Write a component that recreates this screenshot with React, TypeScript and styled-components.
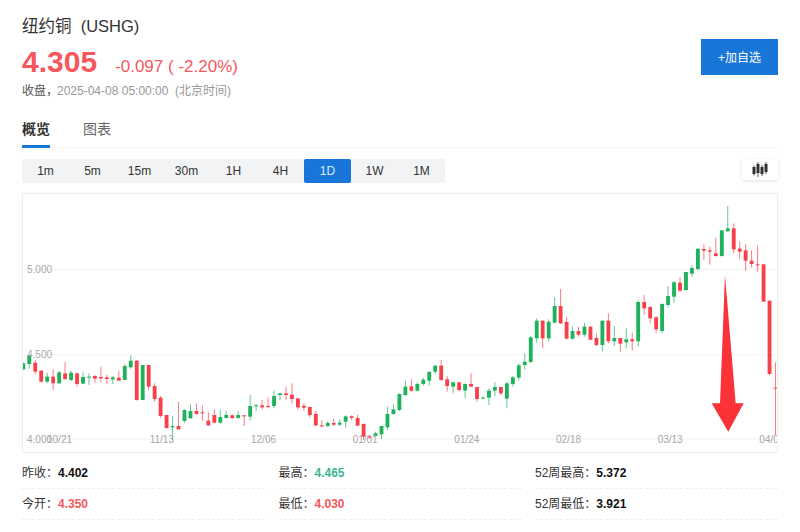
import React from 'react';
import styled, { createGlobalStyle } from 'styled-components';

const GlobalStyle = createGlobalStyle`
  html, body {
    margin: 0;
    background: #fff;
  }
  body {
    font-family: "Liberation Sans", "Noto Sans CJK SC", sans-serif;
    color: #333;
    overflow: hidden;
  }
`;

const UP = '#1fb25c';
const DOWN = '#f7414a';
const RED_TEXT = '#f5575c';

// chart coordinates are in thirds of a pixel, measured from the 4.500 area of the plot
type Candle = ['g' | 'r', number, number, number, number];

const CANDLES: Candle[] = [
  ['g', 70, 88, 68, 90], ['g', 48, 72, 44, 86], ['r', 68, 95, 60, 103], ['r', 92, 125, 90, 128],
  ['g', 110, 125, 98, 130], ['r', 110, 130, 88, 150], ['g', 97, 130, 92, 132], ['r', 100, 117, 66, 120],
  ['g', 98, 120, 92, 124], ['r', 100, 132, 98, 140], ['g', 111, 131, 97, 133], ['g', 110, 113, 100, 135],
  ['r', 108, 116, 105, 128], ['r', 111, 115, 80, 128], ['r', 112, 117, 105, 133], ['g', 112, 118, 108, 132],
  ['r', 113, 122, 92, 122], ['g', 78, 120, 72, 120], ['g', 62, 82, 46, 86], ['r', 62, 180, 60, 182],
  ['g', 75, 180, 75, 180], ['r', 75, 140, 75, 150], ['r', 138, 177, 130, 185], ['r', 173, 228, 168, 233],
  ['r', 225, 264, 225, 266], ['g', 258, 262, 228, 300], ['r', 258, 268, 185, 268], ['g', 210, 243, 208, 248],
  ['g', 213, 235, 193, 236], ['r', 213, 222, 190, 224], ['r', 217, 220, 196, 243], ['r', 242, 256, 216, 258],
  ['r', 225, 248, 208, 250], ['g', 231, 248, 210, 250], ['g', 225, 234, 213, 235], ['r', 226, 234, 222, 238],
  ['g', 225, 234, 214, 236], ['r', 226, 229, 226, 258], ['g', 198, 230, 165, 242], ['g', 196, 199, 192, 214],
  ['r', 196, 202, 180, 208], ['r', 198, 201, 172, 205], ['g', 168, 198, 152, 205], ['g', 160, 165, 158, 180],
  ['r', 160, 165, 140, 180], ['r', 164, 177, 130, 190], ['r', 175, 202, 175, 208], ['r', 197, 203, 190, 213],
  ['r', 201, 225, 200, 232], ['r', 222, 256, 213, 258], ['r', 256, 258, 240, 262], ['g', 249, 258, 243, 262],
  ['r', 249, 254, 236, 258], ['g', 248, 254, 238, 258], ['g', 229, 245, 226, 263], ['r', 229, 234, 226, 240],
  ['r', 234, 257, 224, 258], ['r', 252, 290, 250, 300], ['r', 290, 293, 288, 296], ['g', 280, 288, 275, 290],
  ['g', 258, 283, 258, 297], ['g', 222, 262, 200, 270], ['g', 208, 222, 193, 225], ['g', 162, 210, 160, 213],
  ['g', 140, 165, 122, 168], ['r', 139, 152, 118, 155], ['g', 132, 152, 127, 155], ['g', 119, 132, 113, 137],
  ['g', 96, 122, 93, 137], ['g', 77, 95, 75, 102], ['r', 77, 120, 60, 122], ['r', 118, 138, 108, 155],
  ['g', 127, 140, 125, 160], ['r', 127, 150, 127, 155], ['g', 132, 152, 130, 175], ['r', 132, 140, 100, 140],
  ['r', 141, 177, 141, 185], ['g', 173, 176, 168, 178], ['g', 152, 173, 145, 195], ['g', 141, 152, 127, 168],
  ['r', 141, 160, 141, 165], ['g', 130, 176, 127, 205], ['g', 112, 132, 108, 140], ['g', 76, 113, 70, 122],
  ['g', 65, 75, 40, 90], ['g', -8, 66, -12, 70], ['g', -58, -5, -65, 8], ['r', -58, -5, -58, 25],
  ['g', -55, -5, -62, 5], ['g', -102, -52, -128, -50], ['r', -102, -50, -153, -48], ['r', -54, -4, -68, -2],
  ['g', -27, -4, -40, -2], ['r', -27, -16, -40, -10], ['g', -40, -16, -52, -10], ['r', -40, -1, -40, 0],
  ['r', -6, 15, -20, 18], ['g', -58, 15, -58, 35], ['r', -58, 4, -80, 10], ['g', -6, 4, -42, 18],
  ['r', -6, 11, -6, 35], ['g', -2, 7, -35, 25], ['r', -2, 4, -22, 32], ['g', -114, 4, -120, 18],
  ['r', -114, -95, -135, -75], ['r', -99, -65, -102, -50], ['r', -68, -32, -72, -22], ['g', -108, -27, -110, -20],
  ['g', -132, -105, -162, -98], ['g', -173, -130, -177, -112], ['r', -172, -148, -188, -145], ['g', -204, -150, -204, -148],
  ['g', -216, -199, -224, -190], ['g', -274, -213, -274, -208], ['r', -273, -268, -287, -240], ['r', -269, -265, -280, -226],
  ['r', -260, -252, -307, -250], ['g', -329, -252, -329, -250], ['g', -335, -326, -402, -325], ['r', -335, -272, -350, -260],
  ['r', -274, -265, -296, -242], ['r', -269, -238, -287, -208], ['r', -238, -228, -269, -217], ['r', -227, -225, -283, -205],
  ['r', -227, -115, -227, -115], ['r', -118, 102, -118, 106], ['r', 143, 146, 67, 285]
];

const RANGES = ['1m', '5m', '15m', '30m', '1H', '4H', '1D', '1W', '1M'];

const Y_LABELS = [
  { text: '5.000', line: 229, base: 239 },
  { text: '4.500', line: 486, base: 496 },
  { text: '4.000', line: 738, base: 749 }
];

const X_LABELS = [
  { text: '10/21', x: 75 },
  { text: '11/13', x: 383 },
  { text: '12/06', x: 687 },
  { text: '01/01', x: 992 },
  { text: '01/24', x: 1297 },
  { text: '02/18', x: 1602 },
  { text: '03/13', x: 1907 },
  { text: '04/01', x: 2212 }
];

const STATS = [
  [
    { label: '昨收：', value: '4.402', tone: '#111' },
    { label: '最高：', value: '4.465', tone: '#3bb594' },
    { label: '52周最高：', value: '5.372', tone: '#111' }
  ],
  [
    { label: '今开：', value: '4.350', tone: RED_TEXT },
    { label: '最低：', value: '4.030', tone: RED_TEXT },
    { label: '52周最低：', value: '3.921', tone: '#111' }
  ]
];

const Page = styled.div`
  width: 800px;
  height: 532px;
  padding: 14px 22px 0;
  box-sizing: border-box;
  overflow: hidden;
`;

const Header = styled.header`
  display: flex;
  justify-content: space-between;
  align-items: flex-start;
  height: 87px;
`;

const Title = styled.h1`
  margin: 0;
  font-size: 16.5px;
  font-weight: 400;
  line-height: 24px;
  color: #333;
  white-space: pre;
`;

const PriceRow = styled.div`
  display: flex;
  align-items: baseline;
  gap: 18px;
  height: 40px;
  margin-top: 4px;
  color: ${RED_TEXT};
`;

const Price = styled.span`
  font-size: 30px;
  font-weight: 700;
  line-height: 40px;
`;

const Change = styled.span`
  font-size: 17px;
  white-space: pre;
`;

const Quote = styled.div`
  display: flex;
  font-size: 12px;
  line-height: 16px;
  margin-top: 1px;
  color: #999;
  white-space: pre;
`;

const QuoteState = styled.span`
  width: 35px;
  color: #555;
`;

const AddButton = styled.button`
  width: 77px;
  height: 36px;
  margin-top: 25px;
  padding: 0 0 2px;
  border: 0;
  background: #1976d9;
  color: #fff;
  font: inherit;
  font-size: 12px;
`;

const Tabs = styled.nav`
  display: flex;
  gap: 33px;
  height: 47px;
  padding-top: 17px;
  box-sizing: border-box;
  border-bottom: 1px solid #f6f6f6;
`;

const Tab = styled.div<{ $active?: boolean }>`
  height: 30px;
  line-height: 22px;
  font-size: 14px;
  font-weight: ${(p) => (p.$active ? 700 : 400)};
  color: ${(p) => (p.$active ? '#333' : '#666')};
  border-bottom: 3px solid ${(p) => (p.$active ? '#1976d9' : 'transparent')};
  box-sizing: border-box;
`;

const Toolbar = styled.div`
  display: flex;
  justify-content: space-between;
  align-items: flex-start;
  height: 34px;
  margin-top: 11px;
`;

const RangeGroup = styled.div`
  display: flex;
  background: #f2f3f5;
  border-radius: 2px;
`;

const RangeButton = styled.div<{ $active?: boolean }>`
  width: 47px;
  height: 24px;
  line-height: 24px;
  text-align: center;
  font-size: 12px;
  border-radius: 2px;
  color: ${(p) => (p.$active ? '#dcebfb' : '#333')};
  background: ${(p) => (p.$active ? '#1976d9' : 'transparent')};
`;

const KlineButton = styled.div`
  display: flex;
  align-items: center;
  justify-content: center;
  width: 36px;
  height: 21px;
  background: #fff;
  border-radius: 2px;
  box-shadow: 0 1px 4px rgba(0, 0, 0, 0.12);
`;

const ChartFrame = styled.div`
  width: 756px;
  height: 260px;
  box-sizing: border-box;
  border: 1px solid #eceef0;
  overflow: hidden;
`;

const ChartSvg = styled.svg`
  display: block;
  width: 754px;
  height: 258px;
`;

const AxisText = styled.text`
  font-size: 30px;
  fill: #a6a6a6;
`;

const StatsGrid = styled.div`
  display: grid;
  grid-template-columns: repeat(3, 1fr);
  column-gap: 13.5px;
  margin-top: 5px;
`;

const StatCell = styled.div`
  height: 31px;
  box-sizing: border-box;
  line-height: 30px;
  font-size: 12px;
  color: #333;
  border-bottom: 1px dashed #eceef0;
`;

const StatValue = styled.b<{ $tone: string }>`
  color: ${(p) => p.$tone};
`;

const KlineIcon = () => (
  <svg width='16' height='15' viewBox='0 0 16 15'>
    <g fill='#333'>
      <rect x='0.5' y='5' width='3' height='7' />
      <rect x='1.6' y='3.5' width='0.8' height='10' />
      <rect x='4.5' y='2' width='3' height='9' />
      <rect x='5.6' y='0' width='0.8' height='15' />
      <rect x='8.5' y='5' width='3' height='7' />
      <rect x='9.6' y='3' width='0.8' height='11' />
      <rect x='12.5' y='2' width='3' height='8' />
      <rect x='13.6' y='0' width='0.8' height='12' />
    </g>
  </svg>
);

const Chart = () => (
  <ChartSvg viewBox='3 3 2262 774'>
    {Y_LABELS.map((item) => (
      <line key={item.text} stroke='#f0f1f2' strokeWidth='3' x1='0' x2='2268' y1={item.line} y2={item.line} />
    ))}
    <g transform='translate(0 441)'>
      {CANDLES.map(([tone, top, bottom, high, low], i) => {
        const x = 3.9 + 17.91 * i;
        const color = tone === 'g' ? UP : DOWN;

        return (
          <g fill={color} key={i}>
            <line opacity='0.8' stroke={color} strokeWidth='2.6' x1={x} x2={x} y1={high} y2={low} />
            <rect height={Math.max(bottom - top, 3)} width='11.5' x={x - 5.75} y={top} />
          </g>
        );
      })}
    </g>
    {Y_LABELS.map((item) => (
      <AxisText key={item.text} x='15' y={item.base}>{item.text}</AxisText>
    ))}
    {X_LABELS.map((item) => (
      <AxisText key={item.text} x={item.x} y='749'>{item.text}</AxisText>
    ))}
    <polygon fill='#fb3338' points='2109,246 2094,631 2069,631 2119,716 2165,631 2141,631' />
  </ChartSvg>
);

export default function App () {
  return (
    <Page>
      <GlobalStyle />
      <Header>
        <div>
          <Title>纽约铜  (USHG)</Title>
          <PriceRow>
            <Price>4.305</Price>
            <Change>-0.097 ( -2.20%)</Change>
          </PriceRow>
          <Quote>
            <QuoteState>收盘，</QuoteState>
            <span>2025-04-08 05:00:00  (北京时间)</span>
          </Quote>
        </div>
        <AddButton>+加自选</AddButton>
      </Header>
      <Tabs>
        <Tab $active>概览</Tab>
        <Tab>图表</Tab>
      </Tabs>
      <Toolbar>
        <RangeGroup>
          {RANGES.map((range) => (
            <RangeButton $active={range === '1D'} key={range}>{range}</RangeButton>
          ))}
        </RangeGroup>
        <KlineButton>
          <KlineIcon />
        </KlineButton>
      </Toolbar>
      <ChartFrame>
        <Chart />
      </ChartFrame>
      <StatsGrid>
        {STATS.flat().map((stat) => (
          <StatCell key={stat.label}>
            {stat.label}
            <StatValue $tone={stat.tone}>{stat.value}</StatValue>
          </StatCell>
        ))}
      </StatsGrid>
    </Page>
  );
}
